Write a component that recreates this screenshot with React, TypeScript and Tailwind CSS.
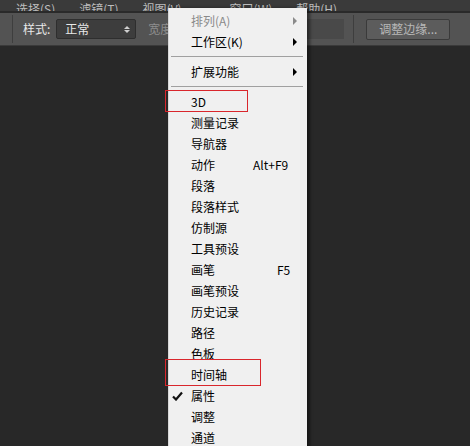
import React from "react";

interface MenuItem {
  label: string;
  shortcut?: string;
  submenu?: boolean;
  disabled?: boolean;
  checked?: boolean;
  separator?: boolean;
}

const items: MenuItem[] = [
  { label: "排列(A)", submenu: true, disabled: true },
  { label: "工作区(K)", submenu: true },
  { label: "", separator: true },
  { label: "扩展功能", submenu: true },
  { label: "", separator: true },
  { label: "3D" },
  { label: "测量记录" },
  { label: "导航器" },
  { label: "动作", shortcut: "Alt+F9" },
  { label: "段落" },
  { label: "段落样式" },
  { label: "仿制源" },
  { label: "工具预设" },
  { label: "画笔", shortcut: "F5" },
  { label: "画笔预设" },
  { label: "历史记录" },
  { label: "路径" },
  { label: "色板" },
  { label: "时间轴" },
  { label: "属性", checked: true },
  { label: "调整" },
  { label: "通道" },
];

const font = { fontFamily: '"Noto Sans CJK SC", "Liberation Sans", sans-serif' };

const Row: React.FC<{ item: MenuItem }> = ({ item }) => {
  if (item.separator) {
    return (
      <div className="flex h-[9px] items-center pl-[2px] pr-[4px]">
        <div className="h-px w-full bg-[#a0a0a0]" />
      </div>
    );
  }
  return (
    <div
      className={`relative flex h-[21px] items-center pl-[22px] text-[12px] leading-none ${
        item.disabled ? "text-[#8a8a8a]" : "text-black"
      }`}
    >
      {item.checked && (
        <svg className="absolute left-[3px] top-[6px]" width="11" height="10" viewBox="0 0 11 10">
          <path d="M1 5.5 L4 8.5 L10 1.5" fill="none" stroke="#111" strokeWidth="2.2" />
        </svg>
      )}
      <span>{item.label}</span>
      {item.shortcut && (
        <span className={`absolute ${item.shortcut === "F5" ? "left-[108px]" : "left-[84px]"}`}>
          {item.shortcut}
        </span>
      )}
      {item.submenu && (
        <span
          className={`absolute right-[10px] top-[7px] h-0 w-0 border-y-[4px] border-l-[4px] border-y-transparent ${
            item.disabled ? "border-l-[#8a8a8a]" : "border-l-black"
          }`}
        />
      )}
    </div>
  );
};

const App: React.FC = () => {
  return (
    <div className="relative h-[446px] w-[470px] overflow-hidden bg-[#282828]" style={font}>
      {/* top menu bar, cut off */}
      <div className="flex h-[11px] items-end gap-6 overflow-hidden bg-[#3a3a3a] pl-4 text-[12px] leading-none text-[#bdbdbd]">
        <span className="-mb-[4px]">选择(S)</span>
        <span className="-mb-[4px]">滤镜(T)</span>
        <span className="-mb-[4px]">视图(V)</span>
        <span className="-mb-[4px] pl-6">窗口(W)</span>
        <span className="-mb-[4px]">帮助(H)</span>
      </div>
      <div className="h-[2px] bg-[#2a2a2a]" />
      {/* options bar */}
      <div className="flex h-[33px] items-center border-b border-[#3a3a3a] bg-[#535353] text-[12px]">
        <div className="ml-[12px] h-[28px] w-px bg-[#3e3e3e]" />
        <span className="ml-[10px] text-[#e8e8e8]">样式:</span>
        <div className="ml-[6px] flex h-[20px] w-[80px] items-center justify-between rounded-[2px] border border-[#2e2e2e] bg-[#3d3d3d] pl-2 pr-[5px] text-[#e8e8e8]">
          <span>正常</span>
          <span className="flex flex-col items-center gap-[1px]">
            <span className="h-0 w-0 border-x-[3px] border-b-[3px] border-x-transparent border-b-[#cfcfcf]" />
            <span className="h-0 w-0 border-x-[3px] border-t-[3px] border-x-transparent border-t-[#cfcfcf]" />
          </span>
        </div>
        <span className="ml-[12px] text-[#8e8e8e]">宽度</span>
        <div className="ml-[130px] h-[20px] w-[42px] bg-[#494949]" />
        <div className="ml-[9px] h-[28px] w-px bg-[#3e3e3e]" />
        <div className="ml-[12px] flex h-[21px] w-[84px] items-center justify-center rounded-[2px] border border-[#3a3a3a] bg-[#5c5c5c] text-[#b8b8b8]">
          调整边缘...
        </div>
      </div>

      {/* dropdown menu */}
      <div className="absolute left-[168px] top-[8px] h-[450px] w-[139px] border-l border-[#d8d8d8] bg-[#f0f0f0] pt-[2px] shadow-[3px_0_3px_rgba(0,0,0,0.45)]">
        {items.map((item, i) => (
          <Row key={i} item={item} />
        ))}
      </div>

      {/* annotation boxes */}
      <div className="absolute left-[165px] top-[90px] h-[22px] w-[83px] border border-[#d9262c]" />
      <div className="absolute left-[165px] top-[359px] h-[27px] w-[96px] border border-[#d9262c]" />
    </div>
  );
};

export default App;
